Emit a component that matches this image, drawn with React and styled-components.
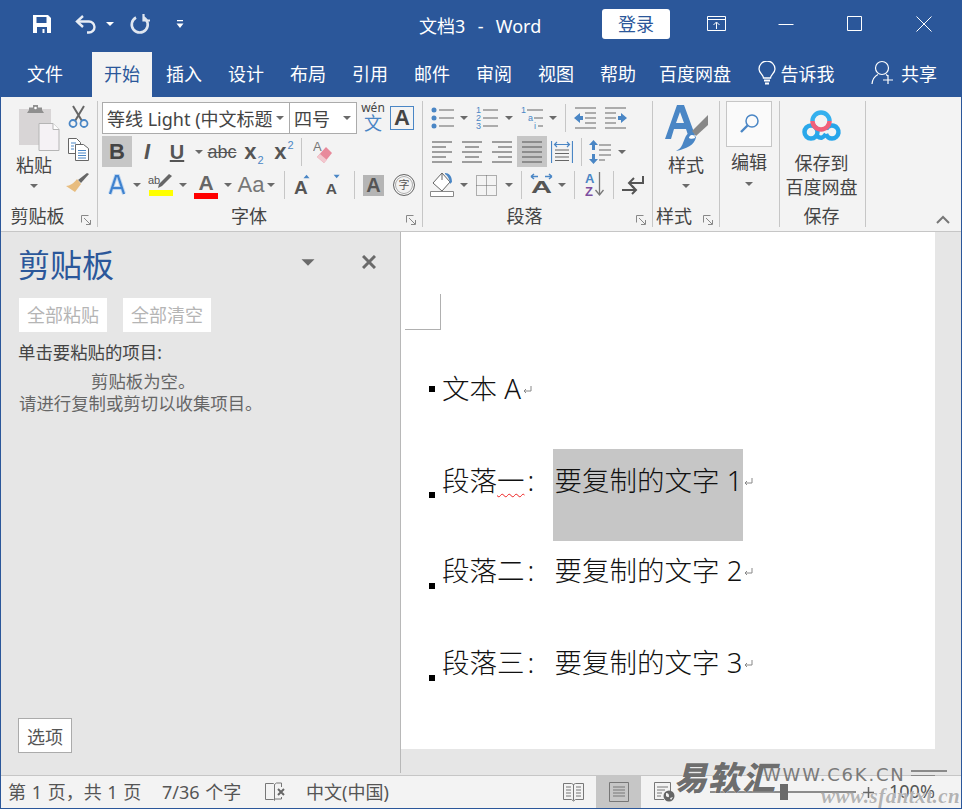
import React from "react";
import styled, { createGlobalStyle } from "styled-components";

const GlobalStyle = createGlobalStyle`
  html, body {
    margin: 0;
    padding: 0;
    background: #fff;
  }
  * {
    box-sizing: border-box;
  }
  body {
    font-family: "Noto Sans", "Noto Sans CJK SC", sans-serif;
  }
`;

const BLUE = "#2b579a";
const ICON_BLUE = "#4a86c5";
const GREY = "#6a6a6a";

const Window = styled.div`
  position: relative;
  width: 962px;
  height: 809px;
  overflow: hidden;
  display: flex;
  flex-direction: column;
  background: #e6e6e6;
  border-left: 1px solid ${BLUE};
  border-right: 1px solid ${BLUE};
  border-bottom: 1px solid ${BLUE};
  color: #444;
`;

const TitleBar = styled.div`
  height: 52px;
  flex: none;
  display: flex;
  align-items: center;
  padding-bottom: 4px;
  background: ${BLUE};
  color: #fff;
`;

const TitleIcon = styled.div`
  display: flex;
  align-items: center;
  justify-content: center;
  flex: none;
  width: ${(p) => p.$w}px;
  margin-left: ${(p) => p.$ml || 0}px;
`;

const TitleText = styled.div`
  flex: none;
  width: 183px;
  margin-left: 234px;
  margin-top: 2px;
  font-size: 18px;
  word-spacing: 1.5px;
  white-space: pre;
`;

const LoginButton = styled.div`
  flex: none;
  width: 68px;
  height: 30px;
  border-radius: 3px;
  background: #fff;
  color: ${BLUE};
  font-size: 18px;
  line-height: 30px;
  text-align: center;
`;

const TabBar = styled.div`
  height: 45px;
  flex: none;
  display: flex;
  padding-left: 14px;
  background: ${BLUE};
  color: #fff;
`;

const Tab = styled.div`
  flex: none;
  width: ${(p) => p.$w || 60}px;
  margin-right: ${(p) => (p.$mr === undefined ? 2 : p.$mr)}px;
  padding-bottom: 4px;
  display: flex;
  align-items: center;
  justify-content: center;
  gap: ${(p) => p.$gap || 0}px;
  font-size: 18px;
  background: ${(p) => (p.$active ? "#f3f3f3" : "transparent")};
  color: ${(p) => (p.$active ? BLUE : "#fff")};
`;

const Ribbon = styled.div`
  position: relative;
  height: 135px;
  flex: none;
  display: flex;
  padding-top: 4px;
  background: #f3f3f3;
  border-bottom: 1px solid #c6c6c6;
`;

const Group = styled.div`
  flex: none;
  width: ${(p) => p.$w}px;
  height: 126px;
  display: flex;
  flex-direction: column;
  border-right: 1px solid #c6c6c6;
`;

const GroupBody = styled.div`
  height: 104px;
  flex: none;
  display: flex;
`;

const GroupLabel = styled.div`
  position: relative;
  height: 22px;
  flex: none;
  font-size: 18px;
  line-height: 22px;
  text-align: center;
  padding-right: ${(p) => p.$pr || 0}px;
  white-space: nowrap;
`;

const Launcher = styled.div`
  position: absolute;
  right: 6px;
  bottom: 2px;
  display: flex;
`;

const BigCol = styled.div`
  flex: none;
  width: ${(p) => p.$w}px;
  margin-left: ${(p) => p.$ml || 0}px;
  padding-top: ${(p) => p.$pt || 0}px;
  display: flex;
  flex-direction: column;
  align-items: center;
  font-size: 18px;
  line-height: 24px;
`;

const IconSlot = styled.div`
  display: flex;
  align-items: flex-start;
  justify-content: center;
  height: ${(p) => p.$h}px;
  margin-left: ${(p) => p.$shift || 0}px;
`;

const SearchBox = styled.div`
  width: 46px;
  height: 46px;
  display: flex;
  align-items: center;
  justify-content: center;
  background: #fafafa;
  border: 1px solid #c6c6c6;
  margin-bottom: 3px;
`;

const SmallCol = styled.div`
  flex: none;
  display: flex;
  flex-direction: column;
  align-items: center;
  gap: 10px;
  width: 24px;
  margin-left: ${(p) => p.$ml || 0}px;
  padding-top: 4px;
`;

const Rows = styled.div`
  display: flex;
  flex-direction: column;
  padding-top: 1px;
  gap: 2px;
`;

const ToolRow = styled.div`
  display: flex;
  align-items: center;
  height: ${(p) => p.$h || 32}px;
`;

const Tool = styled.div`
  flex: none;
  display: flex;
  align-items: center;
  justify-content: center;
  width: ${(p) => p.$w}px;
  height: ${(p) => (p.$fill ? "100%" : "auto")};
  margin-left: ${(p) => p.$ml || 0}px;
  background: ${(p) => (p.$active ? "#c6c6c6" : "transparent")};
`;

const Letter = styled.span`
  position: relative;
  font-family: "Liberation Sans", sans-serif;
  font-size: ${(p) => p.$size || 20}px;
  font-weight: ${(p) => (p.$bold ? 700 : 400)};
  font-style: ${(p) => (p.$italic ? "italic" : "normal")};
  text-decoration: ${(p) => p.$deco || "none"};
  color: ${(p) => p.$color || "#555"};
  line-height: 1;
`;

const Script = styled.sub`
  font-family: "Liberation Sans", sans-serif;
  font-size: 11px;
  font-weight: 400;
  line-height: 0;
  color: ${ICON_BLUE};
  vertical-align: ${(p) => (p.$up ? "10px" : "-5px")};
  margin-left: 1px;
`;

const Sep = styled.div`
  flex: none;
  width: 1px;
  height: 28px;
  background: #c6c6c6;
  margin-left: ${(p) => p.$ml || 0}px;
`;

const CaretMark = styled.i`
  display: block;
  flex: none;
  width: 0;
  height: 0;
  margin-left: ${(p) => p.$ml || 0}px;
  border-left: 5px solid transparent;
  border-right: 5px solid transparent;
  border-top: 5px solid ${(p) => p.$color || GREY};
  transform: ${(p) => (p.$scale ? `scale(${p.$scale})` : "none")};
`;

const SmallCaret = styled(CaretMark)`
  border-left-width: 4px;
  border-right-width: 4px;
  border-top-width: 4px;
`;

const FontBox = styled.div`
  flex: none;
  display: flex;
  align-items: center;
  justify-content: space-between;
  width: ${(p) => p.$w}px;
  height: 32px;
  margin-left: ${(p) => p.$ml || 0}px;
  padding: 0 5px 0 4px;
  background: #fff;
  border: 1px solid #ababab;
  font-size: 18px;
  white-space: nowrap;
  overflow: hidden;
`;

const PhoneticText = styled.div`
  display: flex;
  flex-direction: column;
  align-items: center;
  line-height: 12px;
  font-size: 12px;
  color: #444;
  margin-top: -2px;
`;

const PhoneticBlue = styled.span`
  color: ${ICON_BLUE};
  font-size: 18px;
  line-height: 18px;
`;

const BoxA = styled.div`
  width: 24px;
  height: 24px;
  border: 1px solid ${ICON_BLUE};
  display: flex;
  align-items: center;
  justify-content: center;
`;

const ColorA = styled.div`
  display: flex;
  flex-direction: column;
  align-items: center;
  width: 100%;
`;

const ColorBar = styled.div`
  width: 24px;
  height: 6px;
  margin-top: 1px;
  background: ${(p) => p.$color};
`;

const ShadedA = styled.div`
  width: 21px;
  height: 21px;
  display: flex;
  align-items: center;
  justify-content: center;
  background: #b5b5b5;
`;

const CircleChar = styled.div`
  width: 22px;
  height: 22px;
  border-radius: 50%;
  border: 1px solid #666;
  box-shadow: inset 0 0 0 1px #fff, inset 0 0 0 2px #aaa;
  font-size: 11px;
  line-height: 19px;
  text-align: center;
  color: #555;
`;

const Collapse = styled.div`
  position: absolute;
  right: 11px;
  bottom: 7px;
  display: flex;
`;

const Main = styled.div`
  flex: 1;
  min-height: 0;
  display: flex;
`;

const Pane = styled.div`
  flex: none;
  width: 400px;
  display: flex;
  flex-direction: column;
  padding: 0 17px 20px 17px;
  background: #e6e6e6;
  border-right: 1px solid #b8b8b8;
  margin-bottom: 2px;
`;

const PaneHeader = styled.div`
  display: flex;
  align-items: center;
  height: 66px;
  flex: none;
`;

const PaneTitle = styled.div`
  flex: 1;
  font-size: 32px;
  color: ${BLUE};
  line-height: 1;
`;

const PaneIcon = styled.div`
  display: flex;
  flex: none;
  margin-right: ${(p) => p.$mr || 0}px;
  margin-top: -6px;
`;

const PaneActions = styled.div`
  display: flex;
  gap: 16px;
  margin-left: 1px;
`;

const PaneButton = styled.div`
  width: 88px;
  height: 34px;
  background: #fff;
  color: #b5b5b5;
  font-size: 18px;
  line-height: 35px;
  text-align: center;
`;

const PaneHint = styled.div`
  font-size: 17.4px;
  color: #444;
  line-height: 22px;
  margin-top: 9px;
`;

const EmptyNote = styled.div`
  font-size: 17.4px;
  color: #666;
  line-height: 22px;
  margin-top: 7px;
  margin-left: 1px;
`;

const EmptyFirst = styled.div`
  padding-left: 72px;
`;

const OptionsButton = styled.div`
  margin-top: auto;
  width: 54px;
  height: 35px;
  background: #fff;
  border: 1px solid #ababab;
  font-size: 18px;
  line-height: 36px;
  text-align: center;
  color: #555;
`;

const DocArea = styled.div`
  flex: 1;
  min-width: 0;
  background: #e6e6e6;
`;

const Page = styled.div`
  width: 534px;
  height: 517px;
  background: #fff;
  padding-top: 62px;
  padding-left: 4px;
`;

const CropMark = styled.div`
  width: 36px;
  height: 36px;
  border-right: 1px solid #b0b0b0;
  border-bottom: 1px solid #b0b0b0;
  margin-bottom: 27px;
`;

const Para = styled.div`
  position: relative;
  display: flex;
  height: ${(p) => p.$h}px;
  padding-left: 37px;
  padding-top: ${(p) => p.$pt}px;
  font-size: 27.5px;
  font-weight: 300;
  line-height: 36px;
  color: #111;
  white-space: pre;
`;

const Bullet = styled.i`
  position: absolute;
  left: 24px;
  top: ${(p) => p.$top}px;
  width: 6px;
  height: 6px;
  background: #000;
`;

const Highlight = styled.span`
  position: absolute;
  left: 148px;
  top: 0;
  width: 190px;
  height: 92px;
  background: #c6c6c6;
`;

const ParaText = styled.span`
  position: relative;
`;

const Squiggle = styled.span`
  text-decoration: underline wavy #e22;
  text-decoration-thickness: 1px;
  text-underline-offset: 2px;
`;

const ColonGap = styled.span`
  display: inline-block;
  width: 30px;
  padding-left: 3px;
`;

const MarkWrap = styled.span`
  position: relative;
  display: inline-flex;
  margin-left: 2px;
  margin-top: 15px;
  height: 10px;
`;

const StatusBar = styled.div`
  height: 33px;
  flex: none;
  display: flex;
  align-items: center;
  background: #f3f3f3;
  border-top: 1px solid #c6c6c6;
  font-size: 18px;
  color: #555;
  white-space: pre;
`;

const StatusText = styled.span`
  flex: none;
  width: ${(p) => p.$w}px;
  margin-left: ${(p) => p.$ml}px;
  margin-top: -3px;
  word-spacing: 1px;
`;

const ViewButton = styled.div`
  flex: none;
  width: ${(p) => p.$w}px;
  margin-left: ${(p) => p.$ml || 0}px;
  align-self: stretch;
  display: flex;
  align-items: center;
  justify-content: center;
  background: ${(p) => (p.$active ? "#c6c6c6" : "transparent")};
`;

const ZoomTrack = styled.div`
  position: relative;
  flex: none;
  width: 146px;
  height: 2px;
  margin-left: 35px;
  background: #8c8c8c;
`;

const ZoomThumb = styled.i`
  position: absolute;
  left: 70px;
  top: -7px;
  width: 8px;
  height: 16px;
  background: #6a6a6a;
`;

const ZoomPlus = styled.div`
  flex: none;
  display: flex;
  margin-left: 7px;
`;

const ZoomPercent = styled.span`
  flex: none;
  margin-left: 15px;
  margin-top: -3px;
`;

const WatermarkMain = styled.div`
  position: absolute;
  left: 673px;
  top: 758px;
  font-size: 33px;
  font-weight: 900;
  font-style: italic;
  letter-spacing: 1px;
  color: rgba(90, 90, 90, 0.9);
  line-height: 40px;
  text-shadow: 0 0 1px #fff;
`;

const WatermarkUrl = styled.div`
  position: absolute;
  left: 762px;
  top: 762px;
  font-family: "DejaVu Sans", sans-serif;
  font-size: 18px;
  letter-spacing: 1.8px;
  color: #7a7a7a;
  line-height: 26px;
`;

const WatermarkLines = styled.div`
  position: absolute;
  left: 910px;
  top: 770px;
  display: flex;
  flex-direction: column;
  gap: 3px;
`;

const WatermarkLine = styled.i`
  display: block;
  height: 1.5px;
  width: ${(p) => p.$w}px;
  background: #8a8a8a;
`;

const WatermarkSub = styled.div`
  position: absolute;
  left: 820px;
  top: 785px;
  font-family: "Liberation Serif", serif;
  font-size: 21px;
  font-weight: 700;
  font-style: italic;
  letter-spacing: 0.5px;
  color: rgba(165, 165, 165, 0.85);
  line-height: 22px;
  text-shadow: 0 0 1px #fff;
`;

const SaveIcon = () => (
  <svg width="20" height="20" viewBox="0 0 20 20">
    <path d="M1 1h15l3 3v15H1z" fill="#fff" />
    <path d="M4.5 3h10v6h-10z" fill={BLUE} />
    <path d="M5 13h10v6h-2.5v-4h-2v4H5z" fill={BLUE} />
  </svg>
);

const UndoIcon = () => (
  <svg width="24" height="20" viewBox="0 0 24 20" fill="none" stroke="#e8edf5" strokeWidth="2.4">
    <path d="M9 2 3 7.5 9 13" />
    <path d="M3.5 7.5H15a5.5 5.5 0 0 1 0 11h-2" />
  </svg>
);

const RedoIcon = () => (
  <svg width="22" height="22" viewBox="0 0 22 22" fill="none" stroke="#dfe6f0" strokeWidth="2.6">
    <path d="M8 4.5a8 8 0 1 0 7.5 0" />
    <path d="M15.5 1v6.5H22" strokeWidth="2.2" />
  </svg>
);

const CustomizeIcon = () => (
  <svg width="10" height="9" viewBox="0 0 10 9" fill="#fff">
    <path d="M2 0h6v1.2H2zM1.500 3.5h7L5 8z" />
  </svg>
);

const RibbonDisplayIcon = () => (
  <svg width="20" height="16" viewBox="0 0 20 16" fill="none" stroke="#fff">
    <path d="M.5.5h18v14H.5zM.5 3.5h18M9.500 13V6.500M6.500 9l3-3 3 3" />
  </svg>
);

const MinimizeIcon = () => (
  <svg width="16" height="16" viewBox="0 0 16 16" stroke="#fff">
    <path d="M.5 8.5h15" />
  </svg>
);

const MaximizeIcon = () => (
  <svg width="16" height="16" viewBox="0 0 16 16" fill="none" stroke="#fff">
    <path d="M.5.5h14v14H.5z" />
  </svg>
);

const CloseIcon = () => (
  <svg width="16" height="16" viewBox="0 0 16 16" stroke="#fff">
    <path d="M.5.5l15 15M15.5.5l-15 15" />
  </svg>
);

const BulbIcon = () => (
  <svg width="18" height="24" viewBox="0 0 18 24" fill="none" stroke="#fff" strokeWidth="1.3">
    <path d="M5.5 17c0-3-4.500-5-4.500-9a8 8 0 0 1 16 0c0 4-4.500 6-4.500 9z" />
    <path d="M6 19.500h6M7 22.500h4" strokeWidth="1.8" />
  </svg>
);

const ShareIcon = () => (
  <svg width="23" height="25" viewBox="0 0 23 25" fill="none" stroke="#fff" strokeWidth="1.2">
    <circle cx="11" cy="8" r="6.5" />
    <path d="M1 24c.5-5 3-8 6-9.500M15 14.500l2 1.500M17 15v9M12 20h10" />
  </svg>
);

const PasteIcon = () => (
  <svg width="42" height="46" viewBox="0 0 42 46">
    <path d="M1 4h32v36H1z" fill="#d8d5d6" />
    <path d="M11 5V2.500h4V0h5v2.500h4V5l2 3H9z" fill="#8f8f8f" />
    <circle cx="17.5" cy="3" r="1.3" fill="#fff" />
    <path d="M21 18.500h14l6 6v21H21z" fill="#f5f2f5" stroke="#b5b5b5" />
    <path d="M35 18.500v6h6" fill="#fff" stroke="#b5b5b5" />
  </svg>
);

const ScissorsIcon = () => (
  <svg width="21" height="23" viewBox="0 0 21 23" fill="none">
    <path d="M5 1 14 16M16 1 7 16" stroke="#666" strokeWidth="2" />
    <circle cx="5" cy="18.5" r="3.5" stroke={ICON_BLUE} strokeWidth="1.8" />
    <circle cx="16" cy="18.5" r="3.5" stroke={ICON_BLUE} strokeWidth="1.8" />
  </svg>
);

const CopyIcon = () => (
  <svg width="21" height="23" viewBox="0 0 21 23" fill="#fff" stroke="#666">
    <path d="M.5.5h8l4 4v11H.5z" />
    <path d="M7.5 6.500h8l5 4v12h-13z" />
    <path d="M3 5h5M3 8h3M3 11h3M10 12.500h8M10 15h8M10 17.500h8M10 20h8" stroke={ICON_BLUE} />
  </svg>
);

const BrushIcon = () => (
  <svg width="24" height="23" viewBox="0 0 24 23">
    <path d="M23 3 15 12l-3-3 9-7z" fill="#666" />
    <path d="M11 8 15 13 9 21 0 15c4 0 8-3 11-7z" fill="#e8bd7f" />
  </svg>
);

const LauncherIcon = () => (
  <svg width="10" height="10" viewBox="0 0 10 10" fill="none" stroke="#888">
    <path d="M.5 7.500V.5h7" />
    <path d="M3 3l6 6M9.500 5v4.500H5" />
  </svg>
);

const GlowA = () => (
  <svg width="22" height="22" viewBox="0 0 22 22" fill="none">
    <path d="M4 20 10 2h2l6 18M6.500 14h9" stroke="#bcd4ef" strokeWidth="4" />
    <path d="M4 20 10 2h2l6 18M6.500 14h9" stroke="#3f82cf" strokeWidth="2.2" />
  </svg>
);

const HighlightIcon = () => (
  <svg width="26" height="15" viewBox="0 0 26 15">
    <path d="M24 2 14 12l-4 2 1-4L21 0z" fill="#666" />
    <text x="0" y="10" fontSize="11" fontFamily="Liberation Sans" fill="#555">ab</text>
  </svg>
);

const EraserIcon = () => (
  <svg width="20" height="25" viewBox="0 0 20 25">
    <text x="0" y="12" fontSize="13" fontFamily="Liberation Sans" fill="#777">A</text>
    <path d="M13 8l6 6-8 10-7-6z" fill="#e88a9b" />
    <path d="M7 15l7 6-3 3-7-6z" fill="#f2c7ce" />
  </svg>
);

const GrowA = ({ up }) => (
  <svg width="22" height="27" viewBox="0 0 22 27">
    {up ? (
      <path d="M11 5l3.5-4L18 5z" fill={ICON_BLUE} />
    ) : (
      <path d="M10 1h7l-3.500 4z" fill={ICON_BLUE} />
    )}
    <text x={up ? 0 : 1} y="23" fontSize={up ? 22 : 18} fontWeight="700" fontFamily="Liberation Sans" fill="#555">A</text>
  </svg>
);

const Lines = ({ items, w = 20, step = 5 }) => (
  <svg width={w} height={(items.length - 1) * step + 2} viewBox={`0 0 ${w} ${(items.length - 1) * step + 2}`} stroke="#666" strokeWidth="1.2">
    {items.map(([a, b], i) => (
      <path key={i} d={`M${a} ${i * step + 1}H${b}`} />
    ))}
  </svg>
);

const BulletsIcon = () => (
  <svg width="23" height="22" viewBox="0 0 23 22">
    <circle cx="3" cy="3" r="2.5" fill={ICON_BLUE} />
    <circle cx="3" cy="11" r="2.5" fill={ICON_BLUE} />
    <circle cx="3" cy="19" r="2.5" fill={ICON_BLUE} />
    <path d="M8 3h15M8 11h15M8 19h15" stroke="#666" strokeWidth="1.2" />
  </svg>
);

const NumbersIcon = () => (
  <svg width="23" height="24" viewBox="0 0 23 24">
    <g fontSize="9" fontFamily="Liberation Sans" fill={ICON_BLUE}>
      <text x="0" y="7">1</text>
      <text x="0" y="15">2</text>
      <text x="0" y="23">3</text>
    </g>
    <path d="M7 4h15M7 12h15M7 20h15" stroke="#666" strokeWidth="1.2" />
  </svg>
);

const MultiIcon = () => (
  <svg width="23" height="24" viewBox="0 0 23 24">
    <g fontSize="9" fontFamily="Liberation Sans" fill={ICON_BLUE}>
      <text x="0" y="7">1</text>
      <text x="7" y="15">a</text>
      <text x="13" y="23">i</text>
    </g>
    <path d="M6 4h16M13 12h9M17 20h5" stroke="#666" strokeWidth="1.2" />
  </svg>
);

const IndentIcon = ({ flip }) => (
  <svg width="23" height="22" viewBox="0 0 23 22" style={flip ? { transform: "scaleX(-1)" } : undefined}>
    <path d="M1 1h21M11 6h11M11 11h11M11 16h11M1 21h21" stroke="#666" strokeWidth="1.2" />
    <path d="M0 11l6-5v3h3v4H6v3z" fill={ICON_BLUE} />
  </svg>
);

const DistributeIcon = () => (
  <svg width="22" height="22" viewBox="0 0 22 22">
    <path d="M.5 0v22M21.500 0v22" stroke={ICON_BLUE} strokeWidth="1.2" />
    <path d="M4 3.500h14M6 1 3.500 3.500 6 6M16 1l2.500 2.500L16 6" fill="none" stroke={ICON_BLUE} strokeWidth="1.2" />
    <path d="M4 9h14M4 12.500h14M4 16h14M4 19.500h14" stroke="#666" strokeWidth="1.2" />
  </svg>
);

const SpacingIcon = () => (
  <svg width="22" height="24" viewBox="0 0 22 24">
    <path d="M4.500 0 9 5H6v5H3V5H0zM4.500 24 0 19h3v-5h3v5h3z" fill={ICON_BLUE} />
    <path d="M10 5h12M10 10h12M10 15h12M10 20h6" stroke="#666" strokeWidth="1.2" />
  </svg>
);

const ShadingIcon = () => (
  <svg width="25" height="26" viewBox="0 0 25 26">
    <path d="M12 1 3 11l9 8 8-9z" fill="#fff" stroke="#666" />
    <path d="M12 1v7" stroke="#666" />
    <path d="M15 1c4 0 7 3 7 9l-2 2c0-4-2-8-5-10z" fill={ICON_BLUE} />
    <path d="M.5 19.500h23v5H.5z" fill="#fff" stroke="#888" />
  </svg>
);

const BordersIcon = () => (
  <svg width="21" height="21" viewBox="0 0 21 21" fill="none" stroke="#666" strokeDasharray="1 1">
    <path d="M.5.5h20v20H.5zM10.500.5v20M.5 10.500h20" />
  </svg>
);

const AsianIcon = () => (
  <svg width="23" height="24" viewBox="0 0 23 24">
    <path d="M1 3.500h7M1 3.500 4 1M1 3.500 4 6M15 3.500h7M22 3.500 19 1M22 3.500 19 6" fill="none" stroke={ICON_BLUE} strokeWidth="1.5" />
    <text x="1" y="20" fontSize="16" fontWeight="700" fontFamily="Liberation Sans" fill="#555" textLength="21" lengthAdjust="spacingAndGlyphs">A</text>
  </svg>
);

const SortIcon = () => (
  <svg width="20" height="28" viewBox="0 0 20 28">
    <text x="0" y="12" fontSize="13" fontWeight="700" fontFamily="Liberation Sans" fill="#4a86c5">A</text>
    <text x="0" y="25" fontSize="13" fontWeight="700" fontFamily="Liberation Sans" fill="#7d4e9f">Z</text>
    <path d="M14.500 1v22M10.500 19l4 5 4-5" fill="none" stroke="#777" strokeWidth="1.3" />
  </svg>
);

const RtlIcon = () => (
  <svg width="22" height="21" viewBox="0 0 22 21" fill="none" stroke="#555" strokeWidth="2">
    <path d="M21 1v7H8M12 3 7 8l5 5" />
    <path d="M0 15h14M10 11l4 4-4 4" />
  </svg>
);

const StylesIcon = () => (
  <svg width="43" height="46" viewBox="0 0 43 46">
    <path d="M0 34 12 0h7l11 30h-7l-2-6H9l-3 10zM11 18h8L15 7z" fill="#4a86c5" />
    <path d="M43 10v10L31 31l-4-5z" fill="#888" />
    <path d="M26 27l5 5c-1 8-10 12-20 14 6-3 6-6 9-13 1-3 3-5 6-6z" fill="#4a86c5" />
    <path d="M27 30c2 0 3 1 3 3-2 1-5 1-6 0 0-1 1-3 3-3z" fill="#fff" />
  </svg>
);

const SearchIcon = () => (
  <svg width="19" height="20" viewBox="0 0 19 20" fill="none" stroke={ICON_BLUE}>
    <circle cx="12" cy="7" r="6" strokeWidth="1.5" />
    <path d="M7.500 11.500 1 18" strokeWidth="2.4" />
  </svg>
);

const BaiduCloudIcon = () => (
  <svg width="40" height="33" viewBox="0 0 40 33" fill="none" strokeWidth="4.5">
    <circle cx="9" cy="22" r="6.500" stroke="#2aa8ea" />
    <path d="M24 24c1 3 3 4.500 6 4.500a6.500 6.500 0 1 0-6-9" stroke="#27a5ea" />
    <path d="M15 26c4 3 6 2 9-2" stroke="#27a5ea" />
    <path d="M10.500 11a8.500 8.500 0 0 1 17 0" stroke="#35b0ee" />
    <path d="M10.500 11a8.500 8.500 0 0 0 17 0" stroke="#f0607a" />
  </svg>
);

const CollapseIcon = () => (
  <svg width="14" height="9" viewBox="0 0 14 9" fill="none" stroke="#777" strokeWidth="2">
    <path d="M1 8 7 2l6 6" />
  </svg>
);

const PaneCloseIcon = () => (
  <svg width="14" height="14" viewBox="0 0 14 14" stroke="#6a6a6a" strokeWidth="3">
    <path d="M1 1l12 12M13 1 1 13" />
  </svg>
);

const ReturnMark = () => (
  <svg width="9" height="9" viewBox="0 0 9 9" fill="none" stroke="#888">
    <path d="M8 0v5H1M3 3 1 5l2 2" />
  </svg>
);

const BookIcon = () => (
  <svg width="21" height="19" viewBox="0 0 21 19" fill="none" stroke="#777" strokeWidth="1">
    <path d="M.5.5h8l2 1 2-1h8v16h-8l-2 1.500-2-1.500h-8zM10.500 1.500v16M3 4h5M3 7h5M3 10h5M3 13h5M13 4h5M13 7h5M13 10h5M13 13h5" />
  </svg>
);

const ProofIcon = () => (
  <svg width="21" height="20" viewBox="0 0 21 20" fill="none">
    <path d="M.5 1.500h8l1 1v16l-1-1h-8zM9.500 2.500l2-1.500h5v4M16.500 15v2h-7" stroke="#777" />
    <path d="M13 7l6 6M19 7l-6 6" stroke="#666" strokeWidth="2" />
  </svg>
);

const PageIcon = () => (
  <svg width="20" height="20" viewBox="0 0 20 20" fill="none" stroke="#777">
    <path d="M.5.5h19v19H.5zM4 5h12M4 8h12M4 11h12M4 14h12" />
  </svg>
);

const WebIcon = () => (
  <svg width="21" height="20" viewBox="0 0 21 20" fill="none">
    <path d="M.5.5h16v11M10 17.500H.5V.500M3 5h11M3 8h8M3 11h5M3 14h4" stroke="#777" />
    <circle cx="15" cy="14" r="5.500" fill="#666" />
    <path d="M12 11c2 0 3 1 3 3s-2 1-3 0zM16 16l3-1-2 3z" fill="#f3f3f3" />
  </svg>
);

const PlusIcon = () => (
  <svg width="11" height="11" viewBox="0 0 11 11" stroke="#666" strokeWidth="1.5">
    <path d="M5.500 0v11M0 5.500h11" />
  </svg>
);

const App = () => {
  return (
    <Window>
      <GlobalStyle />
      <TitleBar>
        <TitleIcon $w={20} $ml={31}><SaveIcon /></TitleIcon>
        <TitleIcon $w={24} $ml={22}><UndoIcon /></TitleIcon>
        <TitleIcon $w={8} $ml={8}><SmallCaret $color="#fff" /></TitleIcon>
        <TitleIcon $w={22} $ml={14}><RedoIcon /></TitleIcon>
        <TitleIcon $w={10} $ml={25}><CustomizeIcon /></TitleIcon>
        <TitleText>{"文档3  -  Word"}</TitleText>
        <LoginButton>登录</LoginButton>
        <TitleIcon $w={20} $ml={37}><RibbonDisplayIcon /></TitleIcon>
        <TitleIcon $w={16} $ml={51}><MinimizeIcon /></TitleIcon>
        <TitleIcon $w={16} $ml={53}><MaximizeIcon /></TitleIcon>
        <TitleIcon $w={16} $ml={53}><CloseIcon /></TitleIcon>
      </TitleBar>

      <TabBar>
        <Tab $mr={17}>文件</Tab>
        <Tab $active>开始</Tab>
        <Tab>插入</Tab>
        <Tab>设计</Tab>
        <Tab>布局</Tab>
        <Tab>引用</Tab>
        <Tab>邮件</Tab>
        <Tab>审阅</Tab>
        <Tab>视图</Tab>
        <Tab $mr={1}>帮助</Tab>
        <Tab $w={92} $mr={15}>百度网盘</Tab>
        <Tab $w={80} $gap={5} $mr={34}><BulbIcon />告诉我</Tab>
        <Tab $w={68} $gap={7}><ShareIcon />共享</Tab>
      </TabBar>

      <Ribbon>
        <Group $w={97}>
          <GroupBody>
            <BigCol $w={36} $ml={15} $pt={4}>
              <IconSlot $h={48} $shift={9}><PasteIcon /></IconSlot>
              <span>粘贴</span>
              <SmallCaret style={{ marginTop: 7 }} />
            </BigCol>
            <SmallCol $ml={14}>
              <ScissorsIcon />
              <CopyIcon />
              <BrushIcon />
            </SmallCol>
          </GroupBody>
          <GroupLabel $pr={23}>
            剪贴板
            <Launcher><LauncherIcon /></Launcher>
          </GroupLabel>
        </Group>

        <Group $w={325}>
          <GroupBody>
            <Rows>
              <ToolRow>
                <FontBox $w={188} $ml={4}>
                  <span>等线 Light (中文标题</span>
                  <SmallCaret />
                </FontBox>
                <FontBox $w={68} $ml={-1}>
                  <span>四号</span>
                  <SmallCaret />
                </FontBox>
                <Tool $w={22} $ml={5}>
                  <PhoneticText>wén<PhoneticBlue>文</PhoneticBlue></PhoneticText>
                </Tool>
                <Tool $w={24} $ml={6}><BoxA><Letter $size={22} $bold $color="#444">A</Letter></BoxA></Tool>
              </ToolRow>
              <ToolRow $h={31}>
                <Tool $w={30} $ml={4} $fill $active><Letter $bold $size={22} $color="#444">B</Letter></Tool>
                <Tool $w={30}><Letter $size={22} $bold $italic>I</Letter></Tool>
                <Tool $w={30}><Letter $bold $deco="underline">U</Letter></Tool>
                <Tool $w={10} $ml={2}><SmallCaret /></Tool>
                <Tool $w={28} $ml={4}><Letter $size={18} $deco="line-through">abc</Letter></Tool>
                <Tool $w={24} $ml={6}><Letter $bold $size={22}>x<Script>2</Script></Letter></Tool>
                <Tool $w={24} $ml={6}><Letter $bold $size={22}>x<Script $up>2</Script></Letter></Tool>
                <Sep $ml={5} />
                <Tool $w={24} $ml={9}><EraserIcon /></Tool>
              </ToolRow>
              <ToolRow>
                <Tool $w={22} $ml={8}><GlowA /></Tool>
                <Tool $w={10} $ml={4}><SmallCaret /></Tool>
                <Tool $w={28} $ml={5}>
                  <ColorA><HighlightIcon /><ColorBar $color="#ff0" /></ColorA>
                </Tool>
                <Tool $w={10} $ml={3}><SmallCaret /></Tool>
                <Tool $w={28} $ml={4}>
                  <ColorA><Letter $size={21} $bold $color="#666" style={{ marginBottom: -1 }}>A</Letter><ColorBar $color="#f00" /></ColorA>
                </Tool>
                <Tool $w={10} $ml={3}><SmallCaret /></Tool>
                <Tool $w={26} $ml={5}><Letter $size={22} $color="#777">Aa</Letter></Tool>
                <Tool $w={10} $ml={2}><SmallCaret /></Tool>
                <Sep $ml={8} />
                <Tool $w={19} $ml={9}><GrowA up /></Tool>
                <Tool $w={19} $ml={12}><GrowA /></Tool>
                <Sep $ml={10} />
                <Tool $w={21} $ml={8}><ShadedA><Letter $size={20} $bold>A</Letter></ShadedA></Tool>
                <Tool $w={22} $ml={9}><CircleChar>字</CircleChar></Tool>
              </ToolRow>
            </Rows>
          </GroupBody>
          <GroupLabel $pr={22}>
            字体
            <Launcher><LauncherIcon /></Launcher>
          </GroupLabel>
        </Group>

        <Group $w={230}>
          <GroupBody>
            <Rows>
              <ToolRow>
                <Tool $w={23} $ml={8}><BulletsIcon /></Tool>
                <Tool $w={10} $ml={5}><SmallCaret /></Tool>
                <Tool $w={23} $ml={7}><NumbersIcon /></Tool>
                <Tool $w={10} $ml={5}><SmallCaret /></Tool>
                <Tool $w={23} $ml={7}><MultiIcon /></Tool>
                <Tool $w={10} $ml={4}><SmallCaret /></Tool>
                <Sep $ml={7} />
                <Tool $w={23} $ml={8}><IndentIcon /></Tool>
                <Tool $w={23} $ml={7}><IndentIcon flip /></Tool>
              </ToolRow>
              <ToolRow $h={31}>
                <Tool $w={20} $ml={9}><Lines items={[[0, 20], [0, 14], [0, 20], [0, 14], [0, 20]]} /></Tool>
                <Tool $w={20} $ml={10}><Lines items={[[0, 20], [3, 17], [0, 20], [3, 17], [0, 20]]} /></Tool>
                <Tool $w={20} $ml={10}><Lines items={[[0, 20], [6, 20], [0, 20], [6, 20], [0, 20]]} /></Tool>
                <Tool $w={30} $ml={5} $fill $active><Lines items={[[0, 20], [0, 20], [0, 20], [0, 20], [0, 20]]} /></Tool>
                <Tool $w={22} $ml={4}><DistributeIcon /></Tool>
                <Sep $ml={8} />
                <Tool $w={22} $ml={7}><SpacingIcon /></Tool>
                <Tool $w={10} $ml={6}><SmallCaret /></Tool>
              </ToolRow>
              <ToolRow>
                <Tool $w={25} $ml={7}><ShadingIcon /></Tool>
                <Tool $w={10} $ml={4}><SmallCaret /></Tool>
                <Tool $w={21} $ml={7}><BordersIcon /></Tool>
                <Tool $w={10} $ml={7}><SmallCaret /></Tool>
                <Sep $ml={7} />
                <Tool $w={23} $ml={8}><AsianIcon /></Tool>
                <Tool $w={10} $ml={4}><SmallCaret /></Tool>
                <Sep $ml={7} />
                <Tool $w={20} $ml={10}><SortIcon /></Tool>
                <Sep $ml={8} />
                <Tool $w={22} $ml={8}><RtlIcon /></Tool>
              </ToolRow>
            </Rows>
          </GroupBody>
          <GroupLabel $pr={26}>
            段落
            <Launcher><LauncherIcon /></Launcher>
          </GroupLabel>
        </Group>

        <Group $w={67}>
          <GroupBody>
            <BigCol $w={66} $pt={4}>
              <IconSlot $h={48}><StylesIcon /></IconSlot>
              <span>样式</span>
              <SmallCaret style={{ marginTop: 7 }} />
            </BigCol>
          </GroupBody>
          <GroupLabel $pr={24}>
            样式
            <Launcher><LauncherIcon /></Launcher>
          </GroupLabel>
        </Group>

        <Group $w={60}>
          <GroupBody>
            <BigCol $w={58}>
              <SearchBox><SearchIcon /></SearchBox>
              <span>编辑</span>
              <SmallCaret style={{ marginTop: 8 }} />
            </BigCol>
          </GroupBody>
          <GroupLabel />
        </Group>

        <Group $w={86}>
          <GroupBody>
            <BigCol $w={83} $pt={9}>
              <IconSlot $h={41}><BaiduCloudIcon /></IconSlot>
              <span>保存到</span>
              <span>百度网盘</span>
            </BigCol>
          </GroupBody>
          <GroupLabel $pr={2}>保存</GroupLabel>
        </Group>

        <Collapse><CollapseIcon /></Collapse>
      </Ribbon>

      <Main>
        <Pane>
          <PaneHeader>
            <PaneTitle>剪贴板</PaneTitle>
            <PaneIcon $mr={49}><CaretMark $scale={1.3} /></PaneIcon>
            <PaneIcon $mr={7}><PaneCloseIcon /></PaneIcon>
          </PaneHeader>
          <PaneActions>
            <PaneButton>全部粘贴</PaneButton>
            <PaneButton>全部清空</PaneButton>
          </PaneActions>
          <PaneHint>单击要粘贴的项目:</PaneHint>
          <EmptyNote>
            <EmptyFirst>剪贴板为空。</EmptyFirst>
            请进行复制或剪切以收集项目。
          </EmptyNote>
          <OptionsButton>选项</OptionsButton>
        </Pane>

        <DocArea>
          <Page>
            <CropMark />
            <Para $h={92} $pt={14}>
              <Bullet $top={29} />
              <ParaText>文本 A</ParaText>
              <MarkWrap><ReturnMark /></MarkWrap>
            </Para>
            <Para $h={92} $pt={14}>
              <Highlight />
              <Bullet $top={43} />
              <ParaText>段落<Squiggle>一</Squiggle><ColonGap>:</ColonGap>要复制的文字 1</ParaText>
              <MarkWrap><ReturnMark /></MarkWrap>
            </Para>
            <Para $h={91} $pt={12}>
              <Bullet $top={42} />
              <ParaText>段落二<ColonGap>:</ColonGap>要复制的文字 2</ParaText>
              <MarkWrap><ReturnMark /></MarkWrap>
            </Para>
            <Para $h={92} $pt={13}>
              <Bullet $top={43} />
              <ParaText>段落三<ColonGap>:</ColonGap>要复制的文字 3</ParaText>
              <MarkWrap><ReturnMark /></MarkWrap>
            </Para>
          </Page>
        </DocArea>
      </Main>

      <StatusBar>
        <StatusText $w={133} $ml={7}>{"第 1 页，共 1 页"}</StatusText>
        <StatusText $w={82} $ml={21}>{"7/36 个字"}</StatusText>
        <ViewButton $w={21} $ml={21}><ProofIcon /></ViewButton>
        <StatusText $w={82} $ml={20}>中文(中国)</StatusText>
        <ViewButton $w={21} $ml={175}><BookIcon /></ViewButton>
        <ViewButton $w={45} $ml={12} $active><PageIcon /></ViewButton>
        <ViewButton $w={21} $ml={13}><WebIcon /></ViewButton>
        <ZoomTrack><ZoomThumb /></ZoomTrack>
        <ZoomPlus><PlusIcon /></ZoomPlus>
        <ZoomPercent>100%</ZoomPercent>
      </StatusBar>

      <WatermarkMain>易软汇</WatermarkMain>
      <WatermarkUrl>WWW.C6K.CN</WatermarkUrl>
      <WatermarkLines>
        <WatermarkLine $w={36} />
        <WatermarkLine $w={24} />
      </WatermarkLines>
      <WatermarkSub>www.sfantxt.cn</WatermarkSub>
    </Window>
  );
};

export default App;
